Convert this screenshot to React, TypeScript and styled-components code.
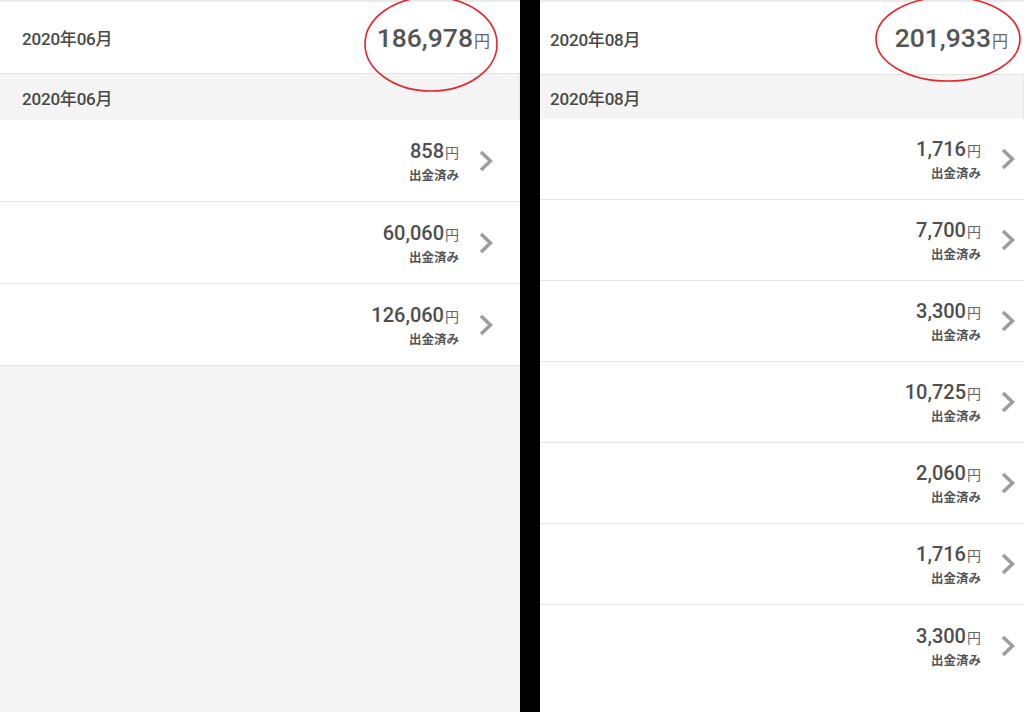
import React from "react";
import styled, { createGlobalStyle } from "styled-components";

const Global = createGlobalStyle`
  html, body { margin: 0; padding: 0; background: #000; }
  body { font-family: Roboto, "Noto Sans CJK JP", sans-serif; }
  * { box-sizing: border-box; }
`;

const Page = styled.div`
  display: flex;
  gap: 20px;
  width: 1024px;
  height: 712px;
  overflow: hidden;
  background: #000;
`;

const Panel = styled.section<{ $w: number; $bg: string }>`
  position: relative;
  width: ${(p) => p.$w}px;
  flex: none;
  height: 712px;
  background: ${(p) => p.$bg};
  display: flex;
  flex-direction: column;
  overflow: hidden;
`;

const Header = styled.header<{ $h: number; $pl: number; $pr: number }>`
  height: ${(p) => p.$h}px;
  flex: none;
  background: #fff;
  border-top: 2px solid #e9e9e9;
  border-bottom: 1px solid #e2e2e2;
  display: flex;
  align-items: center;
  justify-content: space-between;
  padding: 0 ${(p) => p.$pr}px 0 ${(p) => p.$pl}px;
`;

const Title = styled.div`
  font-size: 17px;
  font-weight: 500;
  color: #484848;
  letter-spacing: -0.2px;
`;

const Total = styled.div`
  font-size: 26.5px;
  font-weight: 500;
  color: #555;
  margin-top: -1px;
  white-space: nowrap;
`;

const Yen = styled.span<{ $size: number }>`
  font-size: ${(p) => p.$size}px;
  font-weight: 400;
  color: #666;
  margin-left: 1px;
`;

const SubHeader = styled.div<{ $h: number; $pl: number }>`
  height: ${(p) => p.$h}px;
  flex: none;
  background: #f4f4f4;
  border-right: 1px solid #e8e8e8;
  display: flex;
  align-items: center;
  padding-left: ${(p) => p.$pl}px;
`;

const Row = styled.div<{ $h: number; $pr: number; $line: boolean }>`
  height: ${(p) => p.$h}px;
  flex: none;
  background: #fff;
  border-bottom: ${(p) => (p.$line ? "1px solid #e4e4e4" : "none")};
  display: flex;
  align-items: center;
  justify-content: flex-end;
  gap: 20px;
  padding-right: ${(p) => p.$pr}px;
`;

const AmountBlock = styled.div`
  display: flex;
  flex-direction: column;
  align-items: flex-end;
  margin-top: 1px;
`;

const Amount = styled.div`
  font-size: 20px;
  font-weight: 500;
  color: #4e4e4e;
  line-height: 24px;
`;

const Status = styled.div`
  font-size: 12.5px;
  font-weight: 700;
  color: #555;
  line-height: 16px;
  margin-top: 3px;
`;

const Ring = styled.svg`
  position: absolute;
  left: 0;
  top: 0;
  pointer-events: none;
  overflow: visible;
`;

const Chevron = () => (
  <svg width="14" height="22" viewBox="0 0 14 22" aria-hidden>
    <polyline
      points="2,2 11.5,11 2,20"
      fill="none"
      stroke="#9d9d9d"
      strokeWidth="3.6"
      strokeLinejoin="miter"
    />
  </svg>
);

type PanelProps = {
  width: number;
  bg: string;
  month: string;
  total: string;
  headerH: number;
  subH: number;
  rowH: number;
  padL: number;
  headerPadR: number;
  rowPadR: number;
  amounts: string[];
  lastLine: boolean;
  ring: { cx: number; cy: number; rx: number; ry: number };
};

const Statement = (p: PanelProps) => (
  <Panel $w={p.width} $bg={p.bg}>
    <Header $h={p.headerH} $pl={p.padL} $pr={p.headerPadR}>
      <Title>{p.month}</Title>
      <Total>
        {p.total}
        <Yen $size={16}>円</Yen>
      </Total>
    </Header>
    <SubHeader $h={p.subH} $pl={p.padL}>
      <Title>{p.month}</Title>
    </SubHeader>
    {p.amounts.map((a, i) => (
      <Row
        key={i}
        $h={p.rowH}
        $pr={p.rowPadR}
        $line={p.lastLine || i < p.amounts.length - 1}
      >
        <AmountBlock>
          <Amount>
            {a}
            <Yen $size={14}>円</Yen>
          </Amount>
          <Status>出金済み</Status>
        </AmountBlock>
        <Chevron />
      </Row>
    ))}
    <Ring width={p.width} height={120}>
      <ellipse
        cx={p.ring.cx}
        cy={p.ring.cy}
        rx={p.ring.rx}
        ry={p.ring.ry}
        fill="none"
        stroke="#e5252c"
        strokeWidth="1.6"
      />
    </Ring>
  </Panel>
);

export default function App() {
  return (
    <>
      <Global />
      <Page>
        <Statement
          width={520}
          bg="#f5f5f5"
          month="2020年06月"
          total="186,978"
          headerH={74}
          subH={46}
          rowH={82}
          padL={22}
          headerPadR={30}
          rowPadR={27}
          amounts={["858", "60,060", "126,060"]}
          lastLine={true}
          ring={{ cx: 431, cy: 44, rx: 66, ry: 47 }}
        />
        <Statement
          width={484}
          bg="#fff"
          month="2020年08月"
          total="201,933"
          headerH={75}
          subH={44}
          rowH={81}
          padL={10}
          headerPadR={16}
          rowPadR={9}
          amounts={["1,716", "7,700", "3,300", "10,725", "2,060", "1,716", "3,300"]}
          lastLine={false}
          ring={{ cx: 408, cy: 39, rx: 72, ry: 42 }}
        />
      </Page>
    </>
  );
}
